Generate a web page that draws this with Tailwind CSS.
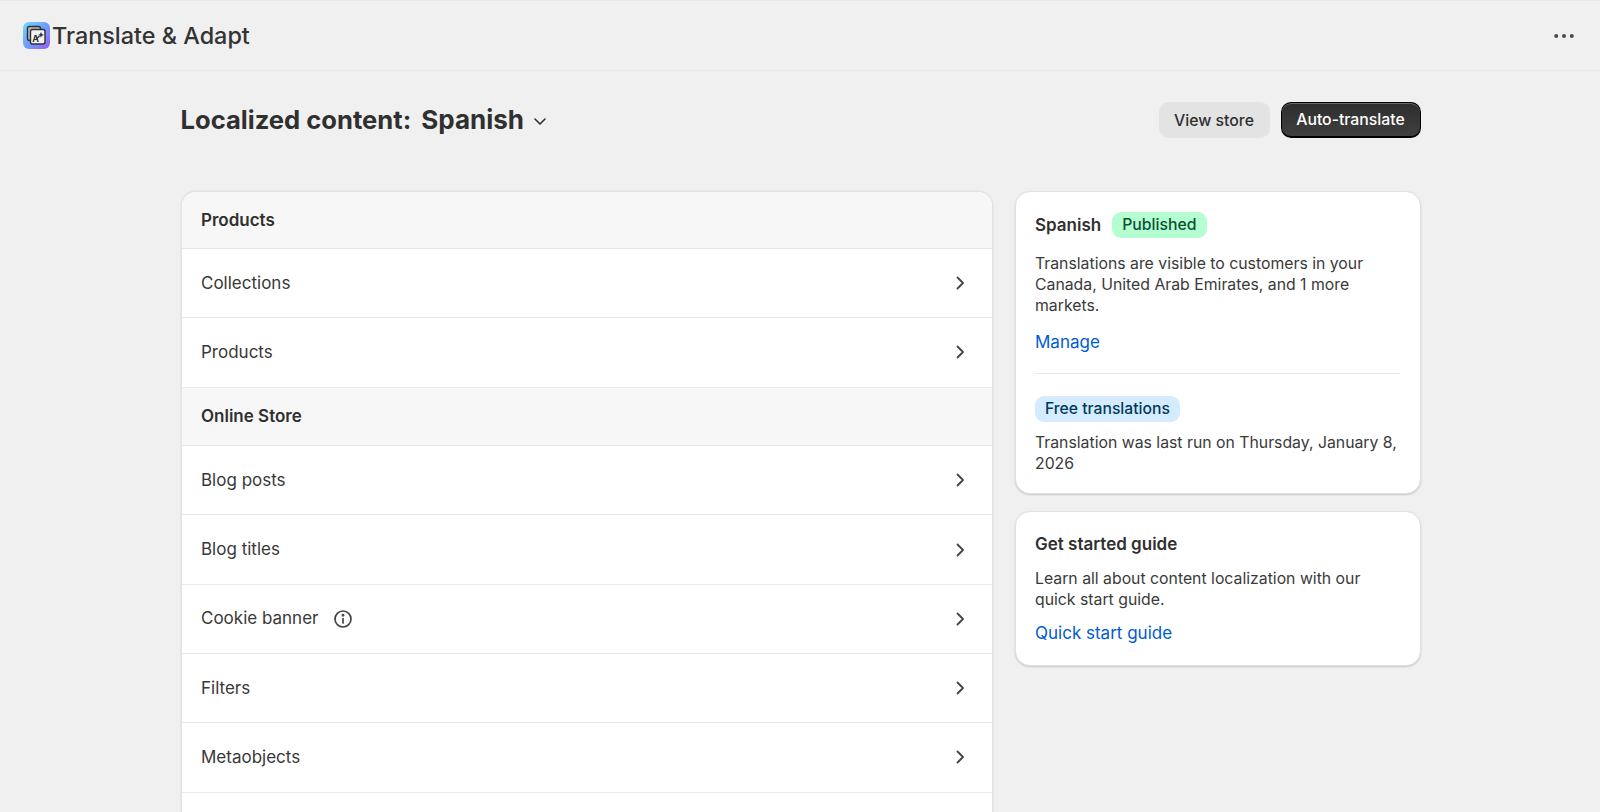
<!DOCTYPE html>
<html lang="en">
<head>
<meta charset="utf-8">
<title>Translate &amp; Adapt</title>
<script src="https://cdn.jsdelivr.net/npm/@tailwindcss/browser@4"></script>
</head>
<body class="bg-[#f0f0f0] h-[812px] overflow-hidden text-[#303030] font-['Inter',sans-serif]">
<header class="h-[71px] border-t border-t-[#e6e6e6] border-b border-b-[#e8e8e8] flex items-center justify-between pl-[23px] pr-[26px]">
  <div class="flex items-center gap-[2px]">
    <div class="w-[27px] h-[27px] rounded-[6px] bg-linear-to-br from-[#6fdcfb] via-[#6f9cfb] to-[#8f5cf6] flex items-center justify-center">
      <svg viewBox="0 0 27 27" class="w-[27px] h-[27px]" fill="none" stroke="#303030">
        <rect x="4.5" y="4.5" width="13" height="14" rx="2" fill="#b9b9c6" stroke-width="1.4"/>
        <rect x="7.5" y="7.5" width="14.5" height="14.5" rx="2" fill="#f4f4f6" stroke-width="1.4"/>
        <text x="9.3" y="20" font-size="9" font-weight="700" fill="#303030" stroke="none" font-family="Inter">A</text>
        <path d="M18 10l.9 2 2 .9-2 .9-.9 2-.9-2-2-.9 2-.9z" fill="#303030" stroke="none"/>
        <path d="M13.5 17l3-3" stroke-width="1.2"/>
      </svg>
    </div>
    <h1 class="text-[23.4px] leading-[32px] font-[550] text-[#333333]">Translate &amp; Adapt</h1>
  </div>
  <svg viewBox="0 0 20 6" class="w-[20px] h-[6px]" fill="#4a4a4a"><circle cx="2.2" cy="3" r="2"/><circle cx="10" cy="3" r="2"/><circle cx="17.8" cy="3" r="2"/></svg>
</header>
<main class="w-[1240px] ml-[180.5px]">
  <div class="flex items-center justify-between h-[36px] mt-[31px]">
    <div class="flex items-center">
      <h2 class="text-[25.6px] leading-[36px] font-bold">Localized content:</h2>
      <span class="text-[26px] leading-[36px] font-bold ml-[10px]">Spanish</span>
      <svg viewBox="0 0 16 16" class="w-[16px] h-[16px] ml-[8px] mt-[2px]" fill="none" stroke="#303030" stroke-width="1.6" stroke-linecap="round" stroke-linejoin="round"><path d="M3 6l5 5 5-5"/></svg>
    </div>
    <div class="flex items-center gap-[11px]">
      <button class="h-[36px] w-[111px] pt-[1px] rounded-[10px] bg-[#e3e3e3] text-[15.8px] font-medium text-[#303030]">View store</button>
      <button class="h-[36px] w-[140px] pt-[1px] rounded-[10px] bg-linear-to-b from-[#2e2e2e] to-[#3f3f3f] border border-black border-b-2 shadow-[inset_0_1px_0_#6a6a6a] text-[15.8px] font-medium text-white">Auto-translate</button>
    </div>
  </div>
  <div class="flex items-start gap-[22px] mt-[53px]">
    <section class="w-[812px] shrink-0 bg-white rounded-t-[15px] border border-[#e2e2e2] border-b-0 shadow-[0_0_2px_rgba(0,0,0,0.12)] overflow-hidden">
      <div class="h-[57px] bg-[#f7f7f7] border-b border-[#e6e6e6] flex items-center pl-[19.5px] pt-[1px] text-[17px] font-semibold">Products</div>
      <a class="h-[69.3px] border-b border-[#ebebeb] flex items-center justify-between pl-[19.5px] pr-[24px] text-[17px] text-[#383838]"><span class="pt-[2px]">Collections</span><svg viewBox="0 0 16 16" class="w-[16px] h-[16px]" fill="none" stroke="#444" stroke-width="1.8" stroke-linecap="round" stroke-linejoin="round"><path d="M5.5 2.5l5.5 5.5-5.5 5.5"/></svg></a>
      <a class="h-[69.3px] border-b border-[#ebebeb] flex items-center justify-between pl-[19.5px] pr-[24px] text-[17px] text-[#383838]"><span class="pt-[1px]">Products</span><svg viewBox="0 0 16 16" class="w-[16px] h-[16px]" fill="none" stroke="#444" stroke-width="1.8" stroke-linecap="round" stroke-linejoin="round"><path d="M5.5 2.5l5.5 5.5-5.5 5.5"/></svg></a>
      <div class="h-[58.5px] bg-[#f7f7f7] border-b border-[#e6e6e6] flex items-center pl-[19.5px] pt-[1px] text-[17px] font-semibold">Online Store</div>
      <a class="h-[69.3px] border-b border-[#ebebeb] flex items-center justify-between pl-[19.5px] pr-[24px] text-[17px] text-[#383838]"><span class="pt-[1px]">Blog posts</span><svg viewBox="0 0 16 16" class="w-[16px] h-[16px]" fill="none" stroke="#444" stroke-width="1.8" stroke-linecap="round" stroke-linejoin="round"><path d="M5.5 2.5l5.5 5.5-5.5 5.5"/></svg></a>
      <a class="h-[69.3px] border-b border-[#ebebeb] flex items-center justify-between pl-[19.5px] pr-[24px] text-[17px] text-[#383838]"><span class="pt-[1px]">Blog titles</span><svg viewBox="0 0 16 16" class="w-[16px] h-[16px]" fill="none" stroke="#444" stroke-width="1.8" stroke-linecap="round" stroke-linejoin="round"><path d="M5.5 2.5l5.5 5.5-5.5 5.5"/></svg></a>
      <a class="h-[69.3px] border-b border-[#ebebeb] flex items-center justify-between pl-[19.5px] pr-[24px] text-[17px] text-[#383838]"><span class="flex items-center gap-[15px]">Cookie banner<svg viewBox="0 0 20 20" class="w-[20px] h-[20px]" fill="none" stroke="#444" stroke-width="1.7" stroke-linecap="round"><circle cx="10" cy="10" r="8"/><path d="M10 9.5v4.5"/><circle cx="10" cy="6.3" r="0.6" fill="#444"/></svg></span><svg viewBox="0 0 16 16" class="w-[16px] h-[16px]" fill="none" stroke="#444" stroke-width="1.8" stroke-linecap="round" stroke-linejoin="round"><path d="M5.5 2.5l5.5 5.5-5.5 5.5"/></svg></a>
      <a class="h-[69.3px] border-b border-[#ebebeb] flex items-center justify-between pl-[19.5px] pr-[24px] text-[17px] text-[#383838]"><span class="pt-[1px]">Filters</span><svg viewBox="0 0 16 16" class="w-[16px] h-[16px]" fill="none" stroke="#444" stroke-width="1.8" stroke-linecap="round" stroke-linejoin="round"><path d="M5.5 2.5l5.5 5.5-5.5 5.5"/></svg></a>
      <a class="h-[69.3px] border-b border-[#ebebeb] flex items-center justify-between pl-[19.5px] pr-[24px] text-[17px] text-[#383838]"><span class="pt-[1px]">Metaobjects</span><svg viewBox="0 0 16 16" class="w-[16px] h-[16px]" fill="none" stroke="#444" stroke-width="1.8" stroke-linecap="round" stroke-linejoin="round"><path d="M5.5 2.5l5.5 5.5-5.5 5.5"/></svg></a>
      <div class="h-[69px]"></div>
    </section>
    <aside class="w-[406px] flex flex-col gap-[17px]">
      <div class="h-[303px] bg-white rounded-[15px] border border-[#e2e2e2] shadow-[0_1px_2px_rgba(0,0,0,0.18)] px-[19.5px] pt-[20px]">
        <div class="flex items-center gap-[11px] h-[26px]">
          <span class="text-[17px] font-semibold pt-[1px]">Spanish</span>
          <span class="h-[26px] rounded-[9px] bg-[#b4fed2] text-[#0c5132] px-[10px] text-[15.8px] font-[450] flex items-center">Published</span>
        </div>
        <p class="text-[15.8px] leading-[21px] mt-[15px] text-[#3a3a3a]">Translations are visible to customers in your Canada, United Arab Emirates, and 1 more markets.</p>
        <a class="block text-[17px] leading-[24px] mt-[14px] text-[#005bd3]">Manage</a>
        <div class="h-px bg-[#e8e8e8] mt-[19px]"></div>
        <span class="inline-flex items-center mt-[22px] h-[26px] rounded-[9px] bg-[#d5ebff] text-[#003a5a] px-[10px] text-[15.7px] font-[450]">Free translations</span>
        <p class="text-[15.8px] leading-[21px] mt-[10px] text-[#3a3a3a]">Translation was last run on Thursday, January 8, 2026</p>
      </div>
      <div class="h-[155px] bg-white rounded-[15px] border border-[#e2e2e2] shadow-[0_1px_2px_rgba(0,0,0,0.18)] px-[19.5px] pt-[20px]">
        <h3 class="text-[17px] leading-[24px] font-semibold">Get started guide</h3>
        <p class="text-[15.8px] leading-[21px] mt-[12px] text-[#3a3a3a]">Learn all about content localization with our quick start guide.</p>
        <a class="block text-[17px] leading-[24px] mt-[11px] text-[#005bd3]">Quick start guide</a>
      </div>
    </aside>
  </div>
</main>
</body>
</html>
